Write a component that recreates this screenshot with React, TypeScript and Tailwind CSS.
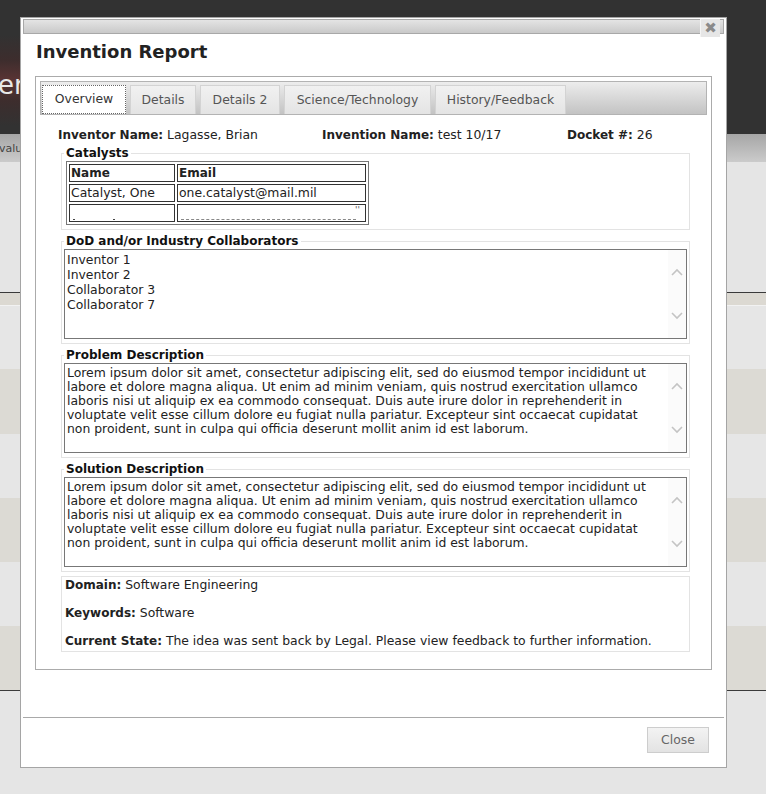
import React from "react";

const LOREM = [
  "Lorem ipsum dolor sit amet, consectetur adipiscing elit, sed do eiusmod tempor incididunt ut",
  "labore et dolore magna aliqua. Ut enim ad minim veniam, quis nostrud exercitation ullamco",
  "laboris nisi ut aliquip ex ea commodo consequat. Duis aute irure dolor in reprehenderit in",
  "voluptate velit esse cillum dolore eu fugiat nulla pariatur. Excepteur sint occaecat cupidatat",
  "non proident, sunt in culpa qui officia deserunt mollit anim id est laborum.",
];

const TABS = [
  { label: "Overview", w: "w-[84px]", active: true },
  { label: "Details", w: "w-[66px]" },
  { label: "Details 2", w: "w-[80px]" },
  { label: "Science/Technology", w: "w-[147px]" },
  { label: "History/Feedback", w: "w-[131px]" },
];

function Chevron({ up }: { up?: boolean }) {
  return (
    <svg width="12" height="8" viewBox="0 0 12 8" className="block">
      <path
        d={up ? "M1 7 L6 2 L11 7" : "M1 1 L6 6 L11 1"}
        fill="none"
        stroke="#c4c4c4"
        strokeWidth="1.6"
      />
    </svg>
  );
}

// fake textarea with a faint scroll column on the right
function TextBox({ lines, lh }: { lines: string[]; lh: string }) {
  return (
    <div className="flex h-[90px] border border-[#777] bg-white">
      <div className={`flex-1 pl-[2px] pt-[2px] text-[12.4px] ${lh} text-[#222] whitespace-nowrap overflow-hidden`}>
        {lines.map((l) => (
          <div key={l}>{l}</div>
        ))}
      </div>
      <div className="w-[18px] bg-[#fbfbfb] flex flex-col items-center justify-between py-[18px]">
        <Chevron up />
        <Chevron />
      </div>
    </div>
  );
}

function Field({ title, children, className = "" }: { title: string; children: React.ReactNode; className?: string }) {
  return (
    <fieldset className={`border border-[#e3e3e3] px-[2px] pb-[4px] ${className}`}>
      <legend className="px-[2px] text-[12px] leading-[16px] font-bold text-[#111]">{title}</legend>
      {children}
    </fieldset>
  );
}

function Label({ children }: { children: React.ReactNode }) {
  return <b className="text-[12px] font-bold">{children}</b>;
}

export default function App() {
  return (
    <div className="relative w-[766px] h-[794px] overflow-hidden bg-[#e5e5e5] font-['DejaVu_Sans',Verdana,sans-serif]">
      {/* page behind the dialog */}
      <div className="h-[134px] bg-[#323232] bg-[radial-gradient(ellipse_at_0%_60%,#5a3434_0%,#3d2d2d_18%,#323232_40%)] pt-[70px]">
        <div className="ml-[-2px] text-[26px] leading-[30px] text-[#e8e8e8]">er</div>
      </div>
      <div className="h-[28px] bg-gradient-to-b from-[#a6a6a6] to-[#cbcbcb] pt-[7px] text-[11px] text-[#444]">
        <span className="ml-[-1px]">valuations</span>
      </div>
      <div className="h-[130px] bg-[#e5e5e5]" />
      <div className="h-px bg-[#3a3a3a]" />
      <div className="h-[12px] bg-[#dcd9d2]" />
      <div className="h-[64px] bg-[#e6e6e6] border-t border-[#f2f2f2]" />
      <div className="h-[65px] bg-[#dcdad4]" />
      <div className="h-[64px] bg-[#e6e6e6]" />
      <div className="h-[64px] bg-[#dcdad4]" />
      <div className="h-[64px] bg-[#e6e6e6]" />
      <div className="h-[64px] bg-[#dcdad4]" />
      <div className="h-px bg-[#3a3a3a]" />

      {/* dialog */}
      <div className="absolute left-[20px] top-[17px] w-[707px] bg-white border border-[#a5a5a5]">
        <div className="mx-[2px] mt-[1px] h-[15px] border border-[#a8a8a8] bg-gradient-to-b from-[#e4e4e4] to-[#c9c9c9]" />
        <div className="absolute right-[6px] top-[1px] w-[20px] h-[18px] bg-[#e6e6e6] border-l border-[#f4f4f4] flex items-center justify-center text-[15px] leading-none text-[#8a8a8a]">
          ✖
        </div>

        <div className="px-[14px]">
          <h1 className="mt-[6px] ml-[1px] text-[18px] leading-[24px] font-bold text-[#222]">Invention Report</h1>

          <div className="mt-[12px] border border-[#ababab] p-[4px] pb-0">
            {/* tab strip */}
            <div className="h-[34px] border border-[#b3b3b3] bg-gradient-to-b from-[#ededed] to-[#c3c3c3] pl-[1px] flex items-end gap-[4px]">
              {TABS.map((t) => (
                <div
                  key={t.label}
                  className={`${t.w} h-[29px] flex items-center justify-center text-[12.4px] ${
                    t.active
                      ? "bg-white border border-dotted border-[#666] text-[#333]"
                      : "bg-gradient-to-b from-[#f1f1f1] to-[#e4e4e4] border border-b-0 border-[#d3d3d3] text-[#555]"
                  }`}
                >
                  {t.label}
                </div>
              ))}
            </div>

            <div className="pl-[21px] pr-[17px] pb-[17px]">
              <div className="mt-[12px] ml-[-3px] flex text-[12.4px] leading-[16px] text-[#222]">
                <div className="w-[264px]"><Label>Inventor Name:</Label> Lagasse, Brian</div>
                <div className="w-[245px]"><Label>Invention Name:</Label> test 10/17</div>
                <div><Label>Docket #:</Label> 26</div>
              </div>

              <Field title="Catalysts" className="mt-[2px] pb-[3px]">
                <table className="ml-[2px] border border-[#777] border-separate border-spacing-[2px] text-[12.4px] leading-[16px] text-[#222]">
                  <tbody>
                    <tr>
                      <td className="w-[106px] border border-[#333] px-[1px] py-0 text-[12px] font-bold">Name</td>
                      <td className="w-[189px] border border-[#333] px-[1px] py-0 text-[12px] font-bold">Email</td>
                    </tr>
                    <tr>
                      <td className="border border-[#333] px-[1px] py-0">Catalyst, One</td>
                      <td className="border border-[#333] px-[1px] py-0">one.catalyst@mail.mil</td>
                    </tr>
                    <tr>
                      <td className="border border-[#333] px-[1px] py-0">
                        <div className="relative h-[16px]">
                          <span className="absolute left-[2px] bottom-[1px] w-[2px] h-[1px] bg-[#444]" />
                          <span className="absolute left-[42px] bottom-[1px] w-[2px] h-[1px] bg-[#444]" />
                        </div>
                      </td>
                      <td className="border border-[#333] px-[1px] py-0">
                        <div className="relative h-[16px]">
                          <div className="absolute left-[2px] right-[8px] bottom-[1px] border-b border-dashed border-[#888]" />
                          <span className="absolute right-[4px] top-[1px] text-[9px] leading-none text-[#555]">''</span>
                        </div>
                      </td>
                    </tr>
                  </tbody>
                </table>
              </Field>

              <Field title="DoD and/or Industry Collaborators" className="mt-[3px]">
                <TextBox lines={["Inventor 1", "Inventor 2", "Collaborator 3", "Collaborator 7"]} lh="leading-[15px]" />
              </Field>

              <Field title="Problem Description" className="mt-[3px]">
                <TextBox lines={LOREM} lh="leading-[14px]" />
              </Field>

              <Field title="Solution Description" className="mt-[3px]">
                <TextBox lines={LOREM} lh="leading-[14px]" />
              </Field>

              <div className="mt-[4px] border border-[#e3e3e3] pl-[3px] pb-[2px] text-[12.4px] leading-[16px] text-[#222] space-y-[12px]">
                <div><Label>Domain:</Label> Software Engineering</div>
                <div><Label>Keywords:</Label> Software</div>
                <div><Label>Current State:</Label> The idea was sent back by Legal. Please view feedback to further information.</div>
              </div>
            </div>
          </div>
        </div>

        {/* footer */}
        <div className="mt-[47px] mx-[2px] border-t border-[#a9a9a9] pt-[9px] pb-[14px] flex justify-end pr-[15px]">
          <div className="w-[62px] h-[26px] border border-[#cdcdcd] bg-gradient-to-b from-[#f3f3f3] to-[#e3e3e3] flex items-center justify-center text-[12.4px] text-[#666]">
            Close
          </div>
        </div>
      </div>
    </div>
  );
}
